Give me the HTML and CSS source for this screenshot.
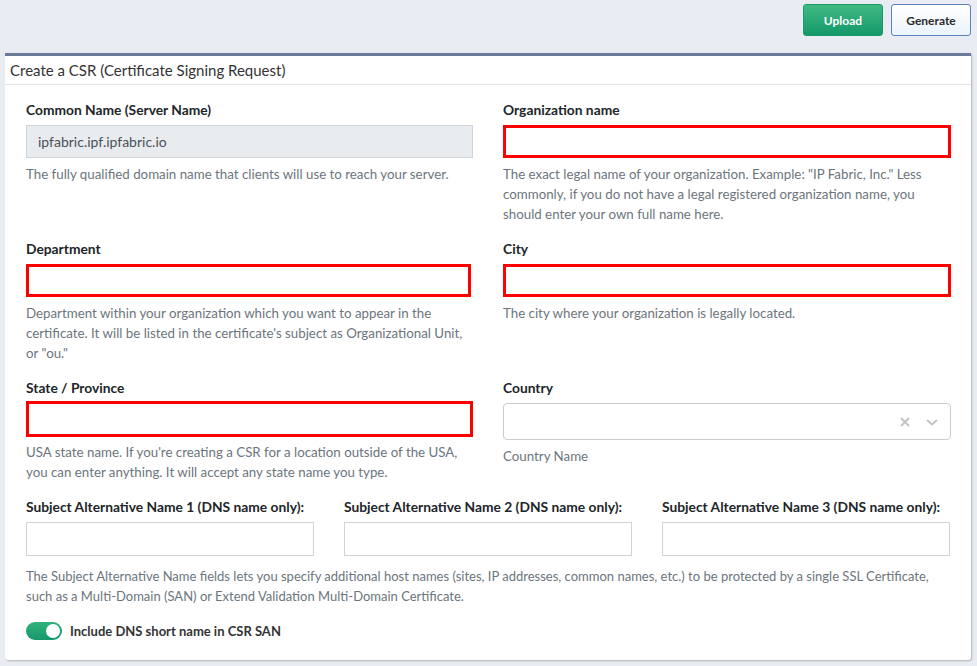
FILE: index.html
```html
<!DOCTYPE html>
<html>
<head>
<meta charset="utf-8">
<link rel="stylesheet" href="styles.css">
</head>
<body>
<div class="topbar">
  <button class="btn btn-upload">Upload</button>
  <button class="btn btn-generate">Generate</button>
</div>
<div class="card">
  <div class="card-header">Create a CSR (Certificate Signing Request)</div>
  <div class="card-body">
    <div class="grid2">
      <div class="field">
        <label class="lbl">Common Name (Server Name)</label>
        <div class="input disabled">ipfabric.ipf.ipfabric.io</div>
        <p class="help">The fully qualified domain name that clients will use to reach your server.</p>
      </div>
      <div class="field">
        <label class="lbl">Organization name</label>
        <div class="input invalid"></div>
        <p class="help">The exact legal name of your organization. Example: "IP Fabric, Inc." Less commonly, if you do not have a legal registered organization name, you should enter your own full name here.</p>
      </div>
      <div class="field">
        <label class="lbl">Department</label>
        <div class="input invalid dept"></div>
        <p class="help">Department within your organization which you want to appear in the certificate. It will be listed in the certificate's subject as Organizational Unit, or "ou."</p>
      </div>
      <div class="field">
        <label class="lbl">City</label>
        <div class="input invalid"></div>
        <p class="help">The city where your organization is legally located.</p>
      </div>
      <div class="field">
        <label class="lbl">State / Province</label>
        <div class="input invalid state"></div>
        <p class="help help-state">USA state name. If you're creating a CSR for a location outside of the USA, you can enter anything. It will accept any state name you type.</p>
      </div>
      <div class="field">
        <label class="lbl">Country</label>
        <div class="select">
          <span class="ind">
            <svg width="12" height="12" viewBox="0 0 12 12"><path d="M2 2 L10 10 M10 2 L2 10" stroke="#c4c4c4" stroke-width="2" fill="none"/></svg>
            <svg width="14" height="10" viewBox="0 0 14 10"><path d="M2 3 L7 7.5 L12 3" stroke="#c4c4c4" stroke-width="2" fill="none"/></svg>
          </span>
        </div>
        <p class="help help-country">Country Name</p>
      </div>
    </div>
    <div class="grid3">
      <div class="field">
        <label class="lbl">Subject Alternative Name 1 (DNS name only):</label>
        <div class="input san"></div>
      </div>
      <div class="field">
        <label class="lbl">Subject Alternative Name 2 (DNS name only):</label>
        <div class="input san"></div>
      </div>
      <div class="field">
        <label class="lbl">Subject Alternative Name 3 (DNS name only):</label>
        <div class="input san"></div>
      </div>
    </div>
    <p class="help help-san">The Subject Alternative Name fields lets you specify additional host names (sites, IP addresses, common names, etc.) to be protected by a single SSL Certificate,<br>such as a Multi-Domain (SAN) or Extend Validation Multi-Domain Certificate.</p>
    <div class="toggle-row">
      <span class="toggle"><span class="knob"></span></span>
      <span class="toggle-label">Include DNS short name in CSR SAN</span>
    </div>
  </div>
</div>
</body>
</html>
```
FILE: styles.css
```css
* { box-sizing: border-box; }
body {
  margin: 0;
  background: #e9ecf2;
  font-family: Lato, "Noto Sans", sans-serif;
  color: #212529;
  height: 666px;
  overflow: hidden;
}
.topbar {
  display: flex;
  justify-content: flex-end;
  gap: 8px;
  padding: 4px 6px 0 0;
}
.btn {
  width: 80px;
  height: 32px;
  border-radius: 3px;
  font-family: Lato, sans-serif;
  font-size: 12px;
  font-weight: 700;
  padding: 0;
}
.btn-upload {
  background: linear-gradient(#40ba84, #14986a);
  border: 1px solid #189a69;
  color: #fff;
}
.btn-generate {
  background: linear-gradient(#ffffff, #ebf3fd);
  border: 1px solid #5a82bb;
  color: #2a2a2a;
}
.card {
  margin: 17px 6px 0 5px;
  background: #fff;
  border-top: 3px solid #6b7a99;
  box-shadow: 1px 1px 2px rgba(0,0,0,0.25);
  border-radius: 0 0 3px 3px;
}
.card-header {
  height: 29px;
  line-height: 28px;
  padding-left: 5px;
  font-size: 15px;
  color: #333;
  border-bottom: 1px solid #e4e6ea;
}
.card-body {
  padding: 16px 20px 20px 21px;
}
.grid2 {
  display: grid;
  grid-template-columns: 447px 448px;
  column-gap: 30px;
  row-gap: 16px;
}
.grid3 {
  display: grid;
  grid-template-columns: 288px 288px 288px;
  column-gap: 30px;
  margin-top: 16px;
}
.field { display: flex; flex-direction: column; }
.lbl {
  display: block;
  font-size: 13.8px;
  font-weight: 700;
  line-height: 18px;
  color: #212529;
}
.input {
  margin-top: 6px;
  height: 33px;
  border: 1px solid #ced4da;
  background: #fff;
  font-size: 14px;
  line-height: 31px;
  padding: 0 11px;
  color: #495057;
}
.input.disabled { background: #e9ecef; }
.input.invalid { border: 3px solid #ff0000; }
.input.dept { width: 445px; }
.input.state { margin-top: 4px; height: 36px; }
.input.san { height: 34px; border-color: #ced4da; }
.select {
  margin-top: 6px;
  height: 37px;
  border: 1px solid #cccccc;
  border-radius: 4px;
  display: flex;
  align-items: center;
  justify-content: flex-end;
  padding-right: 11px;
}
.ind { display: flex; align-items: center; gap: 14px; }
.help {
  margin: 6px 0 0;
  font-size: 13.3px;
  line-height: 20px;
  color: #6c757d;
}
.help-state { margin-top: 5px; }
.help-country { margin-top: 6px; }
.help-san { margin-top: 11px; line-height: 19.5px; font-size: 13px; white-space: nowrap; }
.toggle-row {
  display: flex;
  align-items: center;
  gap: 8px;
  margin-top: 16px;
}
.toggle {
  width: 36px;
  height: 18px;
  border-radius: 9px;
  background: linear-gradient(#2fb27c, #17976a);
  position: relative;
}
.knob {
  position: absolute;
  right: 2px;
  top: 2px;
  width: 14px;
  height: 14px;
  border-radius: 50%;
  background: #fff;
}
.toggle-label {
  font-size: 13px;
  font-weight: 700;
  color: #333;
}
```
